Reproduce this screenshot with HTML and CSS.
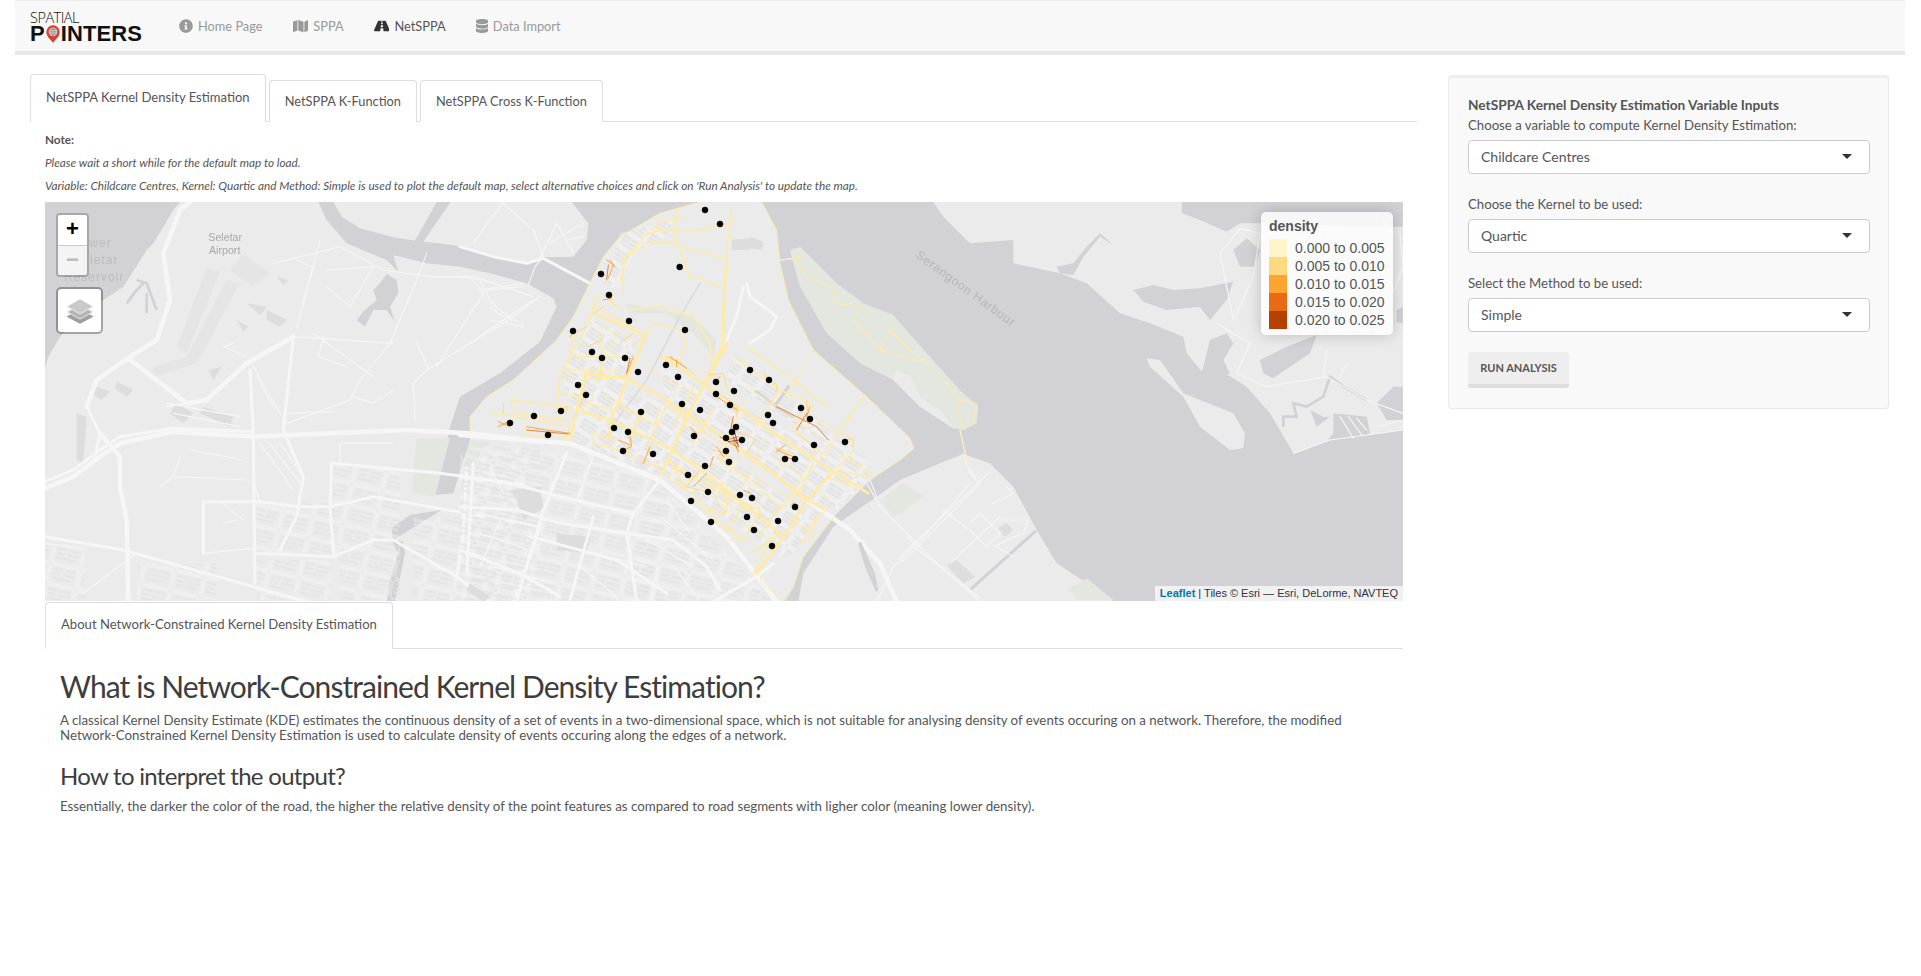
FILE: index.html
```html
<!DOCTYPE html>
<html>
<head>
    <title>Spatial Pointers</title>
    <link rel="stylesheet" href="styles.css">
</head>
<body>
    <nav class="navbar">
        <div class="logo">
            <span class="logo-top">SPATIAL</span>
            <span class="logo-main">P<svg class="logo-pin" viewBox="0 0 16 20"><path class="pin-body" d="M8 0a7.6 7.6 0 0 0-7.6 7.6C.4 12.6 5 16 8 20c3-4 7.600-7.400 7.600-12.400A7.600 7.600 0 0 0 8 0z"/><circle class="pin-globe" cx="8" cy="7.500" r="5"/><path class="pin-grid" d="M3 7.500h10M8 2.500v10M4 4.800h8M4 10.200h8M8 2.500c-3 2.500-3 7.500 0 10M8 2.500c3 2.500 3 7.500 0 10"/></svg>INTERS</span>
        </div>
        <ul class="nav-links">
            <li><a href="#"><svg class="nav-icon" viewBox="0 0 512 512"><path d="M256 8C119.043 8 8 119.083 8 256c0 137.997 111.043 248 248 248s248-110.003 248-248C504 119.083 392.957 8 256 8zm0 110c23.196 0 42 18.804 42 42s-18.804 42-42 42-42-18.804-42-42 18.804-42 42-42zm56 254c0 6.627-5.373 12-12 12h-88c-6.627 0-12-5.373-12-12v-24c0-6.627 5.373-12 12-12h12v-64h-12c-6.627 0-12-5.373-12-12v-24c0-6.627 5.373-12 12-12h64c6.627 0 12 5.373 12 12v100h12c6.627 0 12 5.373 12 12v24z"/></svg>Home Page</a></li>
            <li><a href="#"><svg class="nav-icon" viewBox="0 0 576 512"><path d="M0 117.66v346.32c0 11.32 11.43 19.06 21.94 14.86L160 416V32L20.120 87.950A32.006 32.006 0 0 0 0 117.660zM192 416l192 64V96L192 32v384zM554.060 33.160L416 96v384l139.880-55.950A31.996 31.996 0 0 0 576 394.340V48.020c0-11.320-11.430-19.060-21.940-14.860z"/></svg>SPPA</a></li>
            <li class="active"><a href="#"><svg class="nav-icon" viewBox="0 0 576 512"><path d="M573.190 402.670l-139.790-320C428.430 71.290 417.600 64 405.680 64h-97.590l2.450 23.160c.5 4.720-3.210 8.840-7.960 8.840h-29.160c-4.750 0-8.460-4.120-7.960-8.840L267.910 64h-97.590c-11.930 0-22.760 7.290-27.730 18.670L2.800 402.670C-6.450 423.860 8.310 448 30.540 448h196.840l10.310-97.680c.86-8.140 7.720-14.320 15.910-14.320h68.800c8.190 0 15.050 6.180 15.910 14.320L348.620 448h196.840c22.230 0 36.990-24.140 27.730-45.330zM260.400 135.160a8 8 0 0 1 7.960-7.160h39.290c4.090 0 7.530 3.090 7.960 7.160l4.600 43.580c.75 7.090-4.810 13.260-11.930 13.260h-40.540c-7.130 0-12.680-6.170-11.930-13.260l4.590-43.580zM315.640 304h-55.290c-9.500 0-16.910-8.230-15.910-17.680l5.070-48c.86-8.140 7.720-14.320 15.910-14.320h45.150c8.190 0 15.050 6.180 15.910 14.320l5.070 48c1 9.450-6.410 17.680-15.910 17.680z"/></svg>NetSPPA</a></li>
            <li><a href="#"><svg class="nav-icon" viewBox="0 0 448 512"><path d="M448 73.143v45.714C448 159.143 347.667 192 224 192S0 159.143 0 118.857V73.143C0 32.857 100.333 0 224 0s224 32.857 224 73.143zM448 176v102.857C448 319.143 347.667 352 224 352S0 319.143 0 278.857V176c48.125 33.143 136.208 48.572 224 48.572S399.874 209.143 448 176zm0 160v102.857C448 479.143 347.667 512 224 512S0 479.143 0 438.857V336c48.125 33.143 136.208 48.572 224 48.572S399.874 369.143 448 336z"/></svg>Data Import</a></li>
        </ul>
    </nav>

    <div class="main">
        <div class="left-col">
            <div class="tabs">
                <a class="tab tab-active" href="#">NetSPPA Kernel Density Estimation</a>
                <a class="tab" href="#">NetSPPA K-Function</a>
                <a class="tab" href="#">NetSPPA Cross K-Function</a>
            </div>

            <div class="tab-body">
                <div class="note">
                    <p class="note-title">Note:</p>
                    <p>Please wait a short while for the default map to load.</p>
                    <p>Variable: Childcare Centres, Kernel: Quartic and Method: Simple is used to plot the default map, select alternative choices and click on 'Run Analysis' to update the map.</p>
                </div>

                <div class="map">
                    <svg class="map-canvas" viewBox="0 0 1358 399">
                        <defs>
                            <pattern id="blocks" width="66" height="48" patternUnits="userSpaceOnUse" patternTransform="rotate(33)">
                                <rect class="estate-line" x="3" y="3" width="60" height="42" rx="6"/>
                                <rect class="block" x="10" y="9" width="20" height="6"/>
                                <rect class="block" x="36" y="9" width="20" height="6"/>
                                <rect class="block" x="10" y="21" width="20" height="6"/>
                                <rect class="block" x="36" y="21" width="20" height="6"/>
                                <rect class="block" x="12" y="33" width="40" height="5"/>
                            </pattern>
                            <pattern id="blocksFlat" width="92" height="62" patternUnits="userSpaceOnUse" patternTransform="rotate(13)">
                                <rect class="estate-line" x="3" y="3" width="86" height="56" rx="10"/>
                                <rect class="block" x="12" y="10" width="28" height="7"/>
                                <rect class="block" x="48" y="10" width="32" height="7"/>
                                <rect class="block" x="12" y="24" width="24" height="7"/>
                                <rect class="block" x="44" y="24" width="36" height="7"/>
                                <rect class="block" x="12" y="38" width="60" height="7"/>
                            </pattern>
                        </defs>

                        <g class="map-soft">
                        <rect class="land" width="1358" height="399"/>

                        <!-- water, east side and the rivers -->
                        <g transform="translate(415,-2) scale(.33333)">
                            <path class="water" d="M905,6 L2830,6 L2830,1205 L970,1205 L1000,1160 1030,1070 1130,940 1230,840 1320,780 1362,745 1350,715 1220,590 1060,450 985,300 960,190 950,90Z"/>
                            <path class="water" d="M-425,6 -380,6 -355,50 -300,85 -200,112 -135,122 -70,6 -28,6 -110,125 -20,135 100,170 200,190 250,172 340,170 380,120 385,70 335,6 720,6 600,40 480,110 430,170 390,250 340,350 290,420 160,540 80,590 30,650 30,720 -20,880 -75,885 -30,680 0,590 120,520 240,425 290,320 280,295 200,250 100,222 0,200 -100,190 -200,165 -185,215 -220,180 -340,130 -400,60Z"/>
                            <path class="land" d="M1015,1205 1030,1120 1120,980 1250,890 1320,840 1440,790 1510,762 1590,790 1660,860 1730,990 1790,1090 1960,1205Z"/>
                            <path class="park" d="M990,150 1020,140 1060,180 1130,250 1210,310 1300,345 1400,460 1500,570 1555,620 1550,670 1510,690 1480,685 1380,620 1300,540 1200,490 1100,400 1020,260 1000,190Z"/>
                            <path class="land" d="M1300,540 1310,510 1350,530 1380,590 1450,640 1480,685 1380,620Z"/>
                            <path class="park" d="M1260,900 1330,850 1390,890 1300,950Z"/>
                            <path class="park" d="M490,310 550,320 700,350 770,420 760,470 700,400 620,340 520,340Z"/>
                        </g>

                        <!-- north east land, Pasir Ris side -->
                        <g transform="translate(855,-2) scale(.33333)">
                            <path class="land" d="M100,6 130,50 210,130 340,120 340,190 480,220 560,250 660,340 750,370 850,410 860,460 910,520 960,510 1040,560 1110,640 1180,760 1290,720 1509,690 1509,80 1400,80 1080,70 1020,70 980,95 900,60 845,40 845,6Z"/>
                            <path class="land" d="M740,475 780,480 850,580 1000,640 1035,700 1030,745 990,750 900,680 850,590 750,500Z"/>
                            <path class="water" d="M700,270 760,255 820,270 900,265 1000,245 980,300 930,360 900,320 800,330 730,305Z"/>
                            <path class="water" d="M1000,150 1040,115 1080,150 1065,200 1020,200Z"/>
                            <path class="water" d="M1080,480 1160,440 1250,405 1230,460 1170,500 1120,535 1090,520Z"/>
                            <path class="water" d="M1430,610 1480,560 1509,560 1509,660 1460,660Z"/>
                            <path class="water" d="M930,420 980,400 1000,430 970,480 990,520 930,540 905,520Z"/>
                            <path class="water" d="M470,200 520,190 560,140 600,100 640,135 600,110 550,170 520,225 480,220Z"/>
                            <path class="water" d="M1230,630 1270,650 1290,650 1250,680Z"/>
                            <path class="water" d="M1300,640 1400,650 1410,700 1350,720 1270,740 1300,700Z"/>
                            <path class="minor-water" d="M1150,680 1150,650 1190,650 1180,610 1220,620 1270,590 1290,530 1330,560 1400,600"/>
                            <path class="minor-road" d="M1320,650 1360,715M1345,650 1385,705M1370,655 1400,690"/>
                            <path class="minor-road" d="M950,370 1050,430 1010,520 1100,560 1280,530 1400,600 1509,640M1000,360 1060,230 1080,100 1020,85 960,160 1000,360M1340,490 1320,530M1280,450 1270,530M1430,680 1509,660M1180,760 1290,720 1509,690M1480,100 1450,60M1500,100 1509,200 1480,280"/>
                            <path class="water" d="M1490,330 1509,320 1509,370 1490,365Z"/>
                            <path class="canal" d="M215,1165 405,995"/>
                            <path class="land" d="M235,1160 410,1005 470,1090 640,1205 260,1205Z"/>
                            <path class="park" d="M505,1165 560,1135 640,1200 530,1200Z"/>
                            <path class="park" d="M0,850 70,885 0,945Z"/>
                            <path class="minor-road" d="M190,760 210,820 240,850 50,1045 0,1090M50,1045 240,1195M265,820 0,1070M130,930 200,985M280,910 340,880 320,860M210,970 240,940 300,1000 260,1040 210,990M300,960 385,960 370,1000 280,1040M150,1090 300,950M290,1040 340,1070M20,1010 50,1040"/>
                            <path class="block-fill" d="M140,1095 170,1080 225,1130 190,1150Z"/>
                            <path class="block-fill" d="M295,985 320,970 340,990 315,1010Z"/>
                        </g>

                        <!-- west side, Seletar -->
                        <g transform="translate(-5,-2) scale(.33333)">
                            <path class="water" d="M15,6 420,6 400,30 370,80 340,130 320,150 295,190 250,260 190,300 110,350 60,410 25,470 15,505Z"/>
                            <path class="minor-water" d="M290,240 320,250 350,330M320,280 320,340M260,310 290,270 310,250"/>
                            <path class="water" d="M1205,930 1110,945 1055,985 1060,1035 1075,1060 1050,1140 1040,1205 1065,1205 1095,1060 1090,1025 1060,1020Z"/>
                            <path class="water" d="M1040,222 1070,240 1075,280 1050,320 1065,365 1040,330 1000,330 975,380 950,360 975,330 1010,300 1000,270 1020,250Z"/>
                            <path class="park" d="M1130,715 1230,715 1185,890 1115,880Z"/>
                            <path class="park" d="M1290,720 1350,725 1300,790 1270,800Z"/>
                            <path class="airfield" d="M500,205 540,215 440,460 410,440Z"/>
                            <path class="airfield" d="M570,210 610,160 690,220 640,260Z"/>
                            <path class="airfield" d="M560,240 600,250 470,490 340,530 340,500 440,470Z"/>
                            <path class="block-fill" d="M410,610 460,640 430,670 390,640Z"/>
                            <path class="block-fill" d="M490,620 580,650 570,680 480,640Z"/>
                            <path class="block-fill" d="M230,545 280,570 260,590 225,565Z"/>
                            <path class="block-fill" d="M170,560 210,575 185,600 160,585Z"/>
                            <path class="block-fill" d="M505,510 545,500 520,540Z"/>
                            <path class="block-fill" d="M710,230 745,240 730,255Z"/>
                            <path class="block-fill" d="M680,330 740,360 720,380 680,360Z"/>
                            <path class="block-fill" d="M590,360 625,380 610,395Z"/>
                            <path class="block-fill" d="M620,310 680,320 660,345Z"/>
                            <path class="block-fill" d="M110,640 140,650 130,790 110,780Z"/>
                            <rect class="urban-flat" x="640" y="910" width="240" height="150"/>
                            <rect class="urban-flat" x="880" y="800" width="200" height="280"/>
                            <rect class="urban-flat" x="1290" y="740" width="210" height="460"/>
                            <rect class="urban-flat" x="1120" y="950" width="200" height="250"/>
                            <rect class="urban-flat" x="900" y="1080" width="180" height="120"/>
                            <rect class="urban-flat" x="15" y="1040" width="120" height="160"/>
                            <rect class="urban-flat" x="290" y="1090" width="240" height="110"/>
                            <rect class="urban-flat" x="650" y="1080" width="220" height="120"/>
                            <path class="road-major" d="M15,865 100,830 180,770 240,730 400,695 640,710 1100,690 1290,700 1500,725"/>
                            <path class="road-mid" d="M15,845 100,810 180,750 240,710 400,685 640,695"/>
                            <path class="road-major" d="M140,620 170,540 270,470 350,420 390,300 370,160 420,30 450,6"/>
                            <path class="road-major" d="M270,480 350,540 440,610 500,600 620,490 760,410"/>
                            <path class="road-mid" d="M630,510 640,700 645,1150"/>
                            <path class="road-major" d="M180,700 240,770 240,860 260,960 265,1205"/>
                            <path class="road-mid" d="M140,620 180,700 160,790 60,850"/>
                            <path class="road-mid" d="M15,1010 250,1050 640,1160 800,1205"/>
                            <path class="road-mid" d="M760,410 730,690 790,830 770,950 720,1050"/>
                            <path class="road-mid" d="M875,790 1200,820 1500,860"/>
                            <path class="road-mid" d="M875,790 870,920 880,1060"/>
                            <path class="road-mid" d="M870,920 1000,890 1280,940 1500,980"/>
                            <path class="road-mid" d="M650,1060 880,1070 1000,1020 1060,1020 1250,1130 1350,1205"/>
                            <path class="road-mid" d="M1500,980 1420,1205"/>
                            <path class="road-mid" d="M1280,800 1270,1000 1250,1130"/>
                            <path class="road-mid" d="M490,1060 490,905 660,905 780,920 870,920"/>
                            <path class="road-thin" d="M840,120 770,385M700,190 900,140 1030,210 1170,230 1300,230 1480,290M1160,160 1130,240 1050,430 960,540 930,600 740,670M1125,660 1120,550 1160,510 1390,370 1500,290M760,410 1060,430M1130,430 1165,505M820,400 1000,530M850,410 835,470 920,500M940,590 1000,610 1060,570M380,620 440,610M760,175 820,205 790,300M860,210 1000,200 930,320 860,260M620,470 550,440 580,430M640,500 720,640M730,640 880,635M420,770 400,830 360,860M400,830 620,840M450,750 610,780M490,1060 640,1045M550,910 610,960M550,970 590,960M1060,730 900,730 900,790M1190,500 1330,280 1300,240M1340,270 1450,260M1350,360 1450,380"/>
                            <path class="road-thin" d="M380,610 600,650M400,640 600,680M650,530 700,620M660,730 760,870M690,730 780,850M720,730 790,830M660,910 640,840M15,1030 90,1040M290,1060 130,1180"/>
                            <text class="label label-wide" x="148" y="140">wer</text>
                            <text class="label label-wide" x="150" y="192">letar</text>
                            <text class="label label-wide" x="72" y="243">Reservoir</text>
                            <text class="label" x="505" y="122">Seletar</text>
                            <text class="label" x="507" y="162">Airport</text>
                        </g>

                        <!-- Punggol and the south west estate -->
                        <g transform="translate(415,-2) scale(.33333)">
                            <path class="urban" d="M350,560 600,600 1000,920 1090,930 1000,1060 960,1070 700,880 600,820 330,730Z"/>
                            <path class="urban" d="M600,500 1240,820 1130,930 1040,900 620,600Z"/>
                            <path class="urban" d="M300,520 400,350 530,430 480,620 340,620Z"/>
                            <path class="urban" d="M480,100 640,60 620,110 520,160 480,260 440,260Z"/>
                            <path class="urban" d="M820,460 1230,790 1210,810 800,540Z"/>
                            <rect class="urban-flat" x="0" y="760" width="600" height="445"/>
                            <path class="urban-flat" d="M600,850 940,1205 500,1205Z"/>
                            <path class="block-fill" d="M815,120 870,115 870,150 815,150Z"/>
                            <path class="block-fill" d="M870,110 910,125 905,150 870,145Z"/>
                            <path class="block-fill" d="M150,870 240,860 250,925 190,960 170,900Z"/>
                            <path class="block-fill" d="M290,1000 390,1010 380,1060 290,1050Z"/>
                            <path class="block-fill" d="M30,1150 90,1190 70,1205 20,1170Z"/>

                            <path class="road-major" d="M330,730 600,840 800,1010 950,1205"/>
                            <path class="road-major" d="M0,705 330,730"/>
                            <path class="road-mid" d="M0,830 150,850 300,890 520,940 600,840"/>
                            <path class="road-mid" d="M0,920 170,930 300,970 500,1000 640,1020 740,1100 780,1170"/>
                            <path class="road-mid" d="M320,760 250,930 170,1205"/>
                            <path class="road-mid" d="M520,940 500,1000 530,1205"/>
                            <path class="road-mid" d="M0,1050 180,1120 300,1190M210,1010 470,1080 620,1180M40,790 20,1120M400,950 330,1200"/>
                            <path class="road-thin" d="M90,800 130,880M400,770 350,900M120,960 60,1100M60,1000 240,1060M100,1100 280,1150M370,1050 560,1100M360,1100 470,1190M560,1020 700,1100M600,950 760,1080M620,900 690,1000M640,1100 720,1200"/>
                            <path class="road-mid" d="M760,1205 890,1130 940,1090"/>
                            <path class="road-major" d="M1040,900 1170,990 1260,1090 1310,1205"/>
                            <path class="road-thin" d="M1260,920 1400,1060 1560,1205M1530,850 1400,1000 1300,1100 1250,1205M1230,840 1250,890M1220,850 1260,920"/>
                            <path class="road-mid" d="M0,140 100,170 200,190 250,175 390,250"/>
                            <path class="road-thin" d="M130,6 40,130M130,10 220,90 250,170 225,200 205,255M0,450 130,360 220,300M240,175 290,70 340,160M270,130 370,70M320,120 370,110M0,230 60,240 90,300 130,340 190,375M60,270 190,250M90,320 130,350"/>
                            <path class="road-thin" d="M960,180 1000,175M1500,690 1525,800 1545,830"/>
                            <path class="road-mid" d="M860,250 870,290 950,350 930,390 870,430"/>
                            <path class="road-mid" d="M850,260 830,350 800,420"/>
                            <path class="rail" d="M720,250 660,350 560,540 470,660"/>
                            <path class="canal" d="M890,575 950,620 1000,650"/>
                            <path class="canal" d="M950,610 985,560"/>
                            <path class="canal" d="M1200,1035 1220,1100 1250,1170 1240,1120 1200,1030"/>

                            <!-- density network -->
                            <path class="net-1 net-w3" d="M30,700 30,650 80,590 160,540 290,420 340,350 390,250 430,170 480,110 600,40 720,6M905,6 950,90 960,190 985,300 1060,450 1220,590 1350,715 1362,745 1320,780 1230,840 1130,940 1030,1070 1000,1160 975,1205M900,1125 905,1150 975,1205M1000,175 1040,230 1120,265 1130,310 1200,320 1180,360 1260,450 1290,390 1350,450 1400,490 1450,540 1500,600 1550,610 1540,670 1510,685 1490,620 1500,600M1180,360 1260,450 1400,490M1000,175 1020,170M960,180 1020,175M1500,690 1525,800M1060,450 980,590M1210,590 1120,710M1210,590 1100,760"/>
                            <path class="net-1 net-w7" d="M350,630 460,665 640,750 800,870 970,1010M375,520 500,535 600,590 760,690 920,805 1040,900 1090,925M605,470 760,570 930,690 1120,815 1225,880M800,435 740,540 680,650 625,780 600,825M1120,815 1040,900 980,1000 890,1120M560,400 500,540 470,620 450,660M380,520 350,630 330,720M400,340 540,400M800,170 790,330 790,430 750,520"/>
                            <path class="net-1 net-w4" d="M415,280 370,400 300,520 290,620M405,320 500,370M480,250 500,170 560,130 620,125 700,150 790,175M600,90 720,90 810,70M560,100 620,90M490,280 490,180 550,110 600,85M815,20 800,170M530,430 580,370 660,390 675,430 660,490 610,470M500,330 600,320 700,350 750,430 755,500M580,85 600,60 640,60 670,50M650,30 640,90M700,230 790,265M690,240 640,90M155,590 155,640 330,660M155,600 340,625M85,635 330,680M200,680 200,705 320,715 330,680M360,540 500,530M320,510 480,510M430,430 420,520M340,470 500,470M300,580 350,590M380,610 460,630 440,720M470,720 400,700 400,730 480,750M540,630 500,760 560,790 600,800M480,620 600,680M600,620 560,760M620,620 800,740M860,440 1000,540 1100,620M820,470 960,570 1050,610 1060,630M1050,610 1000,690M1000,690 1100,770M960,570 890,680M700,560 640,680M760,620 700,730M820,660 780,790M620,780 700,830 860,930M660,850 720,830 800,880 800,940 740,930M680,870 640,800M830,1000 800,980 860,910 900,930 860,1010 810,1020M900,870 960,920 900,1000M1020,850 960,930M1060,790 1020,880M1150,700 1180,720 1170,770 1120,810M1130,810 1220,830M1230,820 1140,760M990,950 1040,1000 1060,960 1100,930M1020,1030 1050,1010 1070,960M870,1060 950,1010M940,1000 880,1120M720,920 800,990M1100,830 1170,860M1000,880 1040,900"/>
                            <path class="net-1 net-w3" d="M420,580 560,660M560,500 720,600M640,610 800,720M700,500 860,610M830,620 980,730M860,560 1000,650M1000,650 1120,740M1060,650 1180,720M940,770 1040,840M1040,760 1120,820M700,780 830,880M760,760 900,860M640,840 770,940M880,830 1000,900M760,960 860,1030M820,950 920,1020M1060,860 1110,900M640,570 590,680M700,640 650,720M860,620 810,710M930,690 880,780M1000,730 940,830M1060,760 1000,880M880,800 830,890M810,880 760,950M750,860 700,920M560,620 520,700M440,460 400,560M340,400 320,520M640,800 720,850 700,885 625,835ZM840,760 920,810 890,860 810,810ZM500,420 530,390 500,370M430,380 470,400 450,450 410,430ZM340,520 300,540 290,590M340,560 400,590 380,620"/>
                            <path class="net-2 net-w3" d="M130,610 130,640M480,430 520,400M510,345 530,365M440,290 470,320M340,400 380,380M380,440 430,420M620,470 660,490 700,520M745,525 790,520 800,560M790,590 830,620 830,650M820,690 870,710 885,720 860,760M690,680 720,720M760,750 800,760 800,800M720,810 680,860 760,880 780,920M650,810 700,830M870,880 920,930M990,920 1000,905 1015,930M910,520 950,555 950,575M1040,600 1045,660M1010,700 1060,740 1070,760M950,745 1000,760M1155,720 1180,715 1180,740M470,680 440,710M370,590 360,620M280,640 320,620 320,640M430,320 400,340"/>
                            <path class="net-3 net-w3" d="M440,180 460,195 445,235M450,180 465,200M115,665 150,680M115,680 145,665M200,680 260,690 330,700M500,520 520,470M330,410 345,395M455,295 430,300M510,710 515,740 490,750M475,720 510,735M570,740 550,790M630,470 680,505M650,480 650,500M770,590 830,630M780,530 760,550M770,740 790,770M760,770 750,800M950,750 1000,770M975,735 950,755M690,680 710,700M740,820 700,860M870,880 850,870M1000,910 1015,915M1050,620 1040,650"/>
                            <path class="net-4 net-w2" d="M445,195 440,240M510,475 500,520M835,710 800,720M780,710 830,740M950,620 1070,680 1105,720M1040,640 1010,690M200,690 325,702M975,770 1005,780M820,720 835,755M820,650 810,700"/>
                            <path class="net-5 net-w2" d="M820,710 830,730M805,725 840,720M825,700 835,740"/>

                            <g class="dots">
                                <circle cx="735" cy="30" r="9"/><circle cx="780" cy="72" r="9"/><circle cx="659" cy="201" r="9"/><circle cx="423" cy="222" r="9"/>
                                <circle cx="447" cy="285" r="9"/><circle cx="507" cy="363" r="9"/><circle cx="675" cy="390" r="9"/><circle cx="339" cy="393" r="9"/>
                                <circle cx="396" cy="456" r="9"/><circle cx="426" cy="474" r="9"/><circle cx="495" cy="474" r="9"/><circle cx="534" cy="516" r="9"/>
                                <circle cx="618" cy="495" r="9"/><circle cx="654" cy="531" r="9"/><circle cx="870" cy="510" r="9"/><circle cx="927" cy="540" r="9"/>
                                <circle cx="768" cy="546" r="9"/><circle cx="822" cy="573" r="9"/><circle cx="768" cy="582" r="9"/><circle cx="354" cy="555" r="9"/>
                                <circle cx="378" cy="585" r="9"/><circle cx="810" cy="615" r="9"/><circle cx="666" cy="612" r="9"/><circle cx="720" cy="630" r="9"/>
                                <circle cx="543" cy="636" r="9"/><circle cx="303" cy="633" r="9"/><circle cx="222" cy="648" r="9"/><circle cx="150" cy="669" r="9"/>
                                <circle cx="264" cy="705" r="9"/><circle cx="1023" cy="624" r="9"/><circle cx="1050" cy="657" r="9"/><circle cx="924" cy="645" r="9"/>
                                <circle cx="939" cy="669" r="9"/><circle cx="828" cy="681" r="9"/><circle cx="816" cy="696" r="9"/><circle cx="462" cy="684" r="9"/>
                                <circle cx="504" cy="696" r="9"/><circle cx="702" cy="708" r="9"/><circle cx="798" cy="714" r="9"/><circle cx="846" cy="720" r="9"/>
                                <circle cx="798" cy="753" r="9"/><circle cx="1062" cy="735" r="9"/><circle cx="1155" cy="726" r="9"/><circle cx="489" cy="753" r="9"/>
                                <circle cx="579" cy="762" r="9"/><circle cx="975" cy="777" r="9"/><circle cx="1005" cy="777" r="9"/><circle cx="807" cy="786" r="9"/>
                                <circle cx="735" cy="798" r="9"/><circle cx="684" cy="825" r="9"/><circle cx="744" cy="876" r="9"/><circle cx="840" cy="885" r="9"/>
                                <circle cx="876" cy="894" r="9"/><circle cx="693" cy="903" r="9"/><circle cx="1005" cy="921" r="9"/><circle cx="861" cy="951" r="9"/>
                                <circle cx="954" cy="963" r="9"/><circle cx="753" cy="966" r="9"/><circle cx="882" cy="990" r="9"/><circle cx="936" cy="1038" r="9"/>
                            </g>
                            <text class="label label-harbour" transform="translate(1365,170) rotate(36)">Serangoon Harbour</text>
                        </g>
                        </g>
                    </svg>

                    <div class="zoom-control">
                        <a class="zoom-btn" href="#">+</a>
                        <a class="zoom-btn zoom-off" href="#">&#8722;</a>
                    </div>
                    <div class="layers-control">
                        <svg class="layers-icon" viewBox="0 0 26 26">
                            <path class="layer-back" d="M13 11.500 26 18.500 13 25.500 0 18.500z"/>
                            <path class="layer-mid" d="M13 7 26 14 13 21 0 14z"/>
                            <path class="layer-top" d="M13 1 26 8.500 13 16 0 8.500z"/>
                        </svg>
                    </div>
                    <div class="legend">
                        <div class="legend-title">density</div>
                        <div class="legend-row"><i class="swatch swatch-1"></i>0.000 to 0.005</div>
                        <div class="legend-row"><i class="swatch swatch-2"></i>0.005 to 0.010</div>
                        <div class="legend-row"><i class="swatch swatch-3"></i>0.010 to 0.015</div>
                        <div class="legend-row"><i class="swatch swatch-4"></i>0.015 to 0.020</div>
                        <div class="legend-row"><i class="swatch swatch-5"></i>0.020 to 0.025</div>
                    </div>
                    <div class="attribution"><a href="#">Leaflet</a> | Tiles &copy; Esri &mdash; Esri, DeLorme, NAVTEQ</div>
                </div>

                <div class="tabs tabs-about">
                    <a class="tab tab-active" href="#">About Network-Constrained Kernel Density Estimation</a>
                </div>

                <div class="about">
                    <h1>What is Network-Constrained Kernel Density Estimation?</h1>
                    <p>A classical Kernel Density Estimate (KDE) estimates the continuous density of a set of events in a two-dimensional space, which is not suitable for analysing density of events occuring on a network. Therefore, the modified Network-Constrained Kernel Density Estimation is used to calculate density of events occuring along the edges of a network.</p>
                    <h2>How to interpret the output?</h2>
                    <p>Essentially, the darker the color of the road, the higher the relative density of the point features as compared to road segments with ligher color (meaning lower density).</p>
                </div>
            </div>
        </div>

        <aside class="side-panel">
            <div class="side-title">NetSPPA Kernel Density Estimation Variable Inputs</div>
            <label>Choose a variable to compute Kernel Density Estimation:</label>
            <div class="select">Childcare Centres<span class="caret"></span></div>
            <label>Choose the Kernel to be used:</label>
            <div class="select">Quartic<span class="caret"></span></div>
            <label>Select the Method to be used:</label>
            <div class="select">Simple<span class="caret"></span></div>
            <button class="run-btn">RUN ANALYSIS</button>
        </aside>
    </div>
</body>
</html>
```

FILE: styles.css
```css
* {
    box-sizing: border-box;
}

body {
    margin: 0;
    padding: 0 16px 0 15px;
    background-color: #fff;
    font-family: "Lato", "Liberation Sans", sans-serif;
    font-size: 13.2px;
    color: #555;
}

a {
    text-decoration: none;
    color: inherit;
}

/* top bar */
.navbar {
    display: flex;
    align-items: center;
    height: 55px;
    background-color: #f8f8f8;
    border-top: 1px solid #eee;
    border-bottom: 4px solid #e7e7e7;
}

.logo {
    display: flex;
    flex-direction: column;
    width: 164px;
    padding-left: 15px;
    color: #111;
    font-family: "Liberation Sans", sans-serif;
}

.logo-top {
    font-family: "Open Sans", sans-serif;
    font-weight: 300;
    font-size: 14.5px;
    line-height: 15px;
    letter-spacing: -.5px;
}

.logo-main {
    display: flex;
    align-items: center;
    font-weight: bold;
    font-size: 22px;
    line-height: 17px;
    letter-spacing: .1px;
}

.logo-pin {
    width: 14px;
    height: 18px;
    margin: 0 1px 0 1px;
}

.pin-body {
    fill: #de3b2b;
}

.pin-globe {
    fill: #ddd;
}

.pin-grid {
    fill: none;
    stroke: #777;
    stroke-width: .6;
}

.nav-links {
    display: flex;
    margin: 0;
    padding: 0;
    list-style: none;
    font-size: 12.8px;
    color: #999;
}

.nav-links li {
    margin-right: 30px;
}

.nav-links a {
    display: flex;
    align-items: center;
}

.nav-links .active {
    color: #555;
}

.nav-icon {
    height: 14px;
    margin-right: 5px;
    fill: currentColor;
}

.nav-links .active .nav-icon {
    fill: #333;
}

/* page columns */
.main {
    display: flex;
    align-items: flex-start;
    margin-top: 20px;
    padding-left: 15px;
}

.left-col {
    width: 1387px;
}

.tabs {
    display: flex;
    align-items: flex-end;
    gap: 3px;
    height: 47px;
    border-bottom: 1px solid #ddd;
}

.tab {
    display: flex;
    align-items: center;
    height: 42px;
    margin-bottom: -1px;
    padding: 0 15px;
    background-color: #fff;
    border: 1px solid #ddd;
    border-bottom-color: transparent;
    border-radius: 4px 4px 0 0;
    font-size: 12.8px;
}

.tab-active {
    height: 48px;
    padding: 0 15px 3px;
    border-bottom-color: #fff;
    font-size: 13.05px;
}

.tab-body {
    padding-left: 15px;
    width: 1373px;
}

.note {
    padding-top: 6px;
    height: 80px;
}

.note p {
    margin: 0;
    font-size: 11.75px;
    line-height: 23px;
    font-style: italic;
}

.note .note-title {
    font-style: normal;
    font-weight: bold;
}

/* map */
.map {
    position: relative;
    height: 399px;
    overflow: hidden;
}

.map-canvas {
    display: block;
    width: 1358px;
    height: 399px;
}

.map-soft {
    filter: blur(.3px);
}

.land {
    fill: #ebebeb;
}

.water {
    fill: #d1d1d6;
}

.minor-water {
    fill: none;
    stroke: #d1d1d6;
    stroke-width: 8;
}

.park {
    fill: #e3e7e0;
}

.airfield {
    fill: #e5e5e5;
}

.block {
    fill: #e3e3e3;
}

.estate-line {
    fill: none;
    stroke: #f5f5f5;
    stroke-width: 3;
}

.block-fill {
    fill: #dddddd;
}

.urban {
    fill: url(#blocks);
}

.urban-flat {
    fill: url(#blocksFlat);
    opacity: .75;
}

.road-major,
.road-mid,
.road-thin,
.minor-road,
.rail,
.canal {
    fill: none;
    stroke-linejoin: round;
    stroke-linecap: round;
}

.road-major {
    stroke: #f6f6f6;
    stroke-width: 14;
}

.road-mid {
    stroke: #f6f6f6;
    stroke-width: 9;
}

.road-thin,
.minor-road {
    stroke: #f6f6f6;
    stroke-width: 3.5;
}

.rail {
    stroke: #dcdcdc;
    stroke-width: 5;
}

.canal {
    stroke: #d1d1d6;
    stroke-width: 9;
}

.net-1,
.net-2,
.net-3,
.net-4,
.net-5 {
    fill: none;
    stroke-linejoin: round;
    stroke-linecap: round;
}

.net-1 {
    stroke: #ffeba4;
}

.net-2 {
    stroke: #fed980;
}

.net-3 {
    stroke: #fba53e;
}

.net-4 {
    stroke: #e8701a;
}

.net-5 {
    stroke: #a63a08;
}

.net-w2 {
    stroke-width: 2.5;
}

.net-w3 {
    stroke-width: 3;
}

.net-w4 {
    stroke-width: 4.5;
}

.net-w7 {
    stroke-width: 8;
}

.dots {
    fill: #000;
    stroke: #000;
    stroke-width: 1.5;
}

.label {
    fill: #a9a9a9;
    font-family: "Liberation Sans", sans-serif;
    font-size: 32px;
}

.label-wide {
    font-size: 36px;
    letter-spacing: 3px;
    fill: #bdbdbd;
}

.label-harbour {
    font-size: 37px;
    letter-spacing: 2px;
    fill: #b5b5ba;
}

.zoom-control {
    position: absolute;
    top: 11px;
    left: 11px;
    width: 33px;
    border: 2px solid rgba(0, 0, 0, .2);
    border-radius: 4px;
    overflow: hidden;
    background-clip: padding-box;
    font-family: "Liberation Sans", sans-serif;
}

.zoom-btn {
    display: block;
    height: 30px;
    background-color: #fff;
    color: #000;
    font-size: 22px;
    font-weight: bold;
    line-height: 28px;
    text-align: center;
}

.zoom-off {
    background-color: #f4f4f4;
    color: #bbb;
    border-top: 1px solid #ccc;
}

.layers-control {
    display: flex;
    align-items: center;
    justify-content: center;
    position: absolute;
    top: 85px;
    left: 11px;
    width: 47px;
    height: 47px;
    background-color: #fff;
    border: 2px solid rgba(0, 0, 0, .3);
    border-radius: 5px;
    background-clip: padding-box;
}

.layers-icon {
    width: 26px;
    height: 26px;
}

.layer-back {
    fill: #a0a0a0;
    stroke: #888;
    stroke-width: .5;
}

.layer-mid {
    fill: #b5b5b5;
    stroke: #f4f4f4;
    stroke-width: .8;
}

.layer-top {
    fill: #c9c9c9;
    stroke: #f4f4f4;
    stroke-width: .8;
}

.legend {
    position: absolute;
    top: 10px;
    right: 10px;
    width: 132px;
    height: 123px;
    padding: 6px 8px;
    background-color: rgba(255, 255, 255, .8);
    border-radius: 5px;
    box-shadow: 0 0 15px rgba(0, 0, 0, .2);
    font-family: "Liberation Sans", sans-serif;
    font-size: 14px;
    color: #555;
}

.legend-title {
    height: 21px;
    font-weight: bold;
    line-height: 17px;
}

.legend-row {
    display: flex;
    align-items: center;
    height: 18px;
    white-space: nowrap;
}

.swatch {
    width: 18px;
    height: 18px;
    margin-right: 8px;
    flex: none;
}

.swatch-1 {
    background-color: #fef6ca;
}

.swatch-2 {
    background-color: #fed97f;
}

.swatch-3 {
    background-color: #fda430;
}

.swatch-4 {
    background-color: #e86a12;
}

.swatch-5 {
    background-color: #b54100;
}

.attribution {
    position: absolute;
    right: 0;
    bottom: 0;
    padding: 0 5px;
    height: 15px;
    background-color: rgba(255, 255, 255, .7);
    font-family: "Liberation Sans", sans-serif;
    font-size: 11px;
    line-height: 15px;
    color: #333;
}

.attribution a {
    color: #0078a8;
    font-weight: bold;
}

/* about section */
.tabs-about {
    width: 1358px;
    margin-top: 2px;
    height: 46px;
}

.tabs-about .tab-active {
    height: 47px;
    padding: 0 15px 4px;
    font-size: 13.1px;
}

.about {
    padding-left: 15px;
    width: 1358px;
}

.about h1 {
    margin: 21px 0 10px;
    font-size: 30px;
    font-weight: 400;
    line-height: 33px;
    letter-spacing: -.93px;
    color: #3d3d3d;
}

.about h2 {
    margin: 20px 0 10px;
    font-size: 24px;
    font-weight: 400;
    line-height: 26px;
    letter-spacing: -.7px;
    color: #3d3d3d;
}

.about p {
    max-width: 1290px;
    margin: 0;
    font-size: 13.3px;
    line-height: 15px;
}

/* inputs */
.side-panel {
    width: 441px;
    height: 334px;
    margin-left: 31px;
    padding: 18px 19px 0;
    background-color: #f9f9f9;
    border: 1px solid #e9e9e9;
    border-top: 3px solid #eee;
    border-radius: 4px;
}

.side-title {
    margin-bottom: 2px;
    font-size: 13.7px;
    font-weight: bold;
    line-height: 18px;
}

.side-panel label {
    display: block;
    line-height: 18px;
    margin-bottom: 6px;
}

.select {
    position: relative;
    display: flex;
    align-items: center;
    width: 402px;
    height: 34px;
    margin-bottom: 21px;
    padding-left: 12px;
    padding-bottom: 1px;
    background-color: #fff;
    border: 1px solid #ccc;
    border-radius: 4px;
    font-size: 14px;
    color: #555;
}

.caret {
    position: absolute;
    top: 13px;
    right: 17px;
    border-top: 5px solid #333;
    border-left: 5px solid transparent;
    border-right: 5px solid transparent;
}

.run-btn {
    display: block;
    width: 101px;
    height: 36px;
    margin-top: -1px;
    padding: 0 0 1px;
    background-color: #eee;
    border: none;
    border-bottom: 4px solid #ddd;
    border-radius: 3px;
    font-family: inherit;
    font-size: 11px;
    font-weight: bold;
    color: #555;
}
```
